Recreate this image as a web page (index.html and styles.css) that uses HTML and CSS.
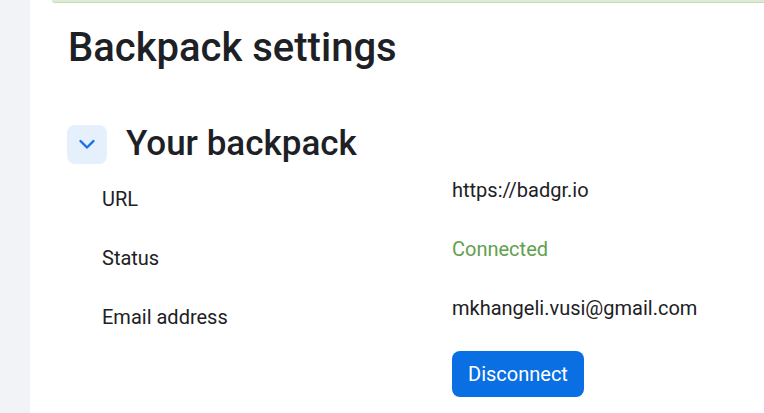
FILE: index.html
```html
<!DOCTYPE html>
<html lang="en">
<head>
  <meta charset="UTF-8">
  <meta name="viewport" content="width=device-width, initial-scale=1.0">
  <title>Backpack settings</title>
  <link rel="stylesheet" href="styles.css">
</head>
<body>
  <div id="page">
    <div class="drawer"></div>
    <div class="main">
      <div class="alert-success"></div>
      <h2 class="page-title">Backpack settings</h2>
      <div class="section">
        <div class="section-head">
          <span class="toggle">
            <svg width="18" height="18" viewBox="0 0 18 18">
              <path d="M2.5 6 L9 12.5 L15.5 6" fill="none" stroke="#1570ea" stroke-width="2.4" stroke-linecap="round" stroke-linejoin="round"/>
            </svg>
          </span>
          <h3>Your backpack</h3>
        </div>
        <dl class="fields">
          <dt>URL</dt>
          <dd>https://badgr.io</dd>
          <dt>Status</dt>
          <dd class="connected">Connected</dd>
          <dt>Email address</dt>
          <dd>mkhangeli.vusi@gmail.com</dd>
        </dl>
        <div class="actions">
          <button class="btn">Disconnect</button>
        </div>
      </div>
    </div>
  </div>
</body>
</html>
```

FILE: styles.css
```css
*{
  margin: 0;
  padding: 0;
  box-sizing: border-box;
}
body{
  font-family: Roboto, "Liberation Sans", sans-serif;
  color: #1d2125;
  background: #fff;
}
#page{
  display: flex;
  min-height: 100vh;
  overflow: hidden;
}
#page .drawer{
  width: 30px;
  flex-shrink: 0;
  background-color: #f1f3f7;
}
#page .main{
  flex: 1;
  padding-left: 37px;
}
.alert-success{
  height: 3px;
  margin-left: -15px;
  margin-right: -20px;
  background-color: #dcebd4;
  border-bottom: 1px solid #c5dbb9;
  border-bottom-left-radius: 6px;
}
h2.page-title{
  margin-top: 21px;
  font-size: 40px;
  line-height: 48px;
  font-weight: 500;
  padding-left: 1px;
}
.section-head{
  display: flex;
  align-items: center;
  gap: 19px;
  margin-top: 52px;
}
.section-head .toggle{
  display: flex;
  align-items: center;
  justify-content: center;
  width: 40px;
  height: 39px;
  border-radius: 8px;
  background-color: #e6f0fc;
}
.section-head h3{
  font-size: 35px;
  line-height: 40px;
  font-weight: 500;
}
dl.fields{
  display: grid;
  grid-template-columns: 350px 1fr;
  align-items: start;
  row-gap: 22px;
  margin-top: 12px;
  padding-left: 35px;
  font-size: 20px;
  line-height: 28px;
}
dl.fields dt{
  padding-top: 9px;
}
dl.fields dd.connected{
  color: #62a04d;
}
.actions{
  margin-top: 20px;
  padding-left: 385px;
}
.btn{
  font-family: Roboto, "Liberation Sans", sans-serif;
  font-size: 20px;
  line-height: 46px;
  height: 46px;
  padding: 0 16px;
  color: #fff;
  background-color: #0a6fe3;
  border: 0;
  border-radius: 8px;
}
```
